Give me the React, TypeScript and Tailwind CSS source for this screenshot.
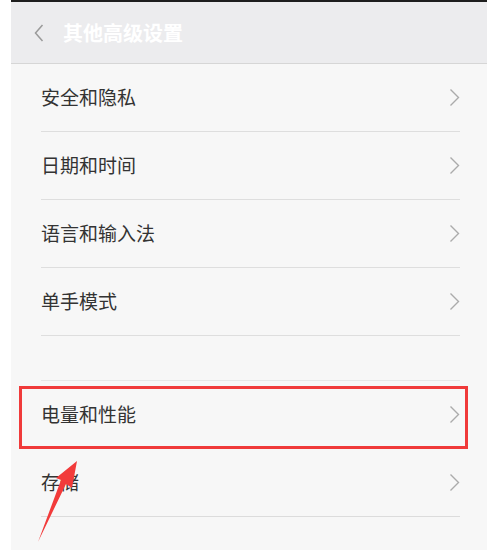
import { type ReactNode } from 'react';

const font = { fontFamily: '"Noto Sans CJK SC", "Noto Sans", sans-serif' };

function Chevron() {
    return (
        <svg width="11" height="19" viewBox="0 0 11 19" className="shrink-0">
            <path d="M1.5 1.5 L9.5 9.5 L1.5 17.5" fill="none" stroke="#ababab" strokeWidth="1.4" />
        </svg>
    );
}

function Row({ label, children, last }: { label: string; children?: ReactNode; last?: boolean }) {
    return (
        <div className="relative">
            <div
                className={`ml-[30px] mr-[27px] flex h-[68px] items-center justify-between ${
                    last ? 'border-b border-[#dcdcdc]' : 'border-b border-[#dedede]'
                }`}
            >
                <span className="text-[19px] text-[#333333]">{label}</span>
                <Chevron />
            </div>
            {children}
        </div>
    );
}

export default function App() {
    return (
        <div className="relative flex h-[550px] w-[487px] overflow-hidden bg-white" style={font}>
            <div className="w-[11px] shrink-0 bg-white" />
            <div className="flex flex-1 flex-col border-t-2 border-[#1e1e1e] bg-[#f7f7f7]">
                {/* Header */}
                <div className="flex h-[62px] items-center gap-[19px] border-b border-[#d6d6d6] bg-[#ececee] pl-[23px]">
                    <svg width="10" height="18" viewBox="0 0 10 18">
                        <path d="M8.5 1 L1.5 9 L8.5 17" fill="none" stroke="#9a9a9a" strokeWidth="1.5" />
                    </svg>
                    <span className="text-[20px] font-bold text-white">其他高级设置</span>
                </div>

                <Row label="安全和隐私" />
                <Row label="日期和时间" />
                <Row label="语言和输入法" />
                <Row label="单手模式" />

                <div className="ml-[30px] mr-[27px] h-[45px] border-b border-[#e6e6e6]" />

                <Row label="电量和性能">
                    <div className="absolute left-[8px] top-[5px] h-[63px] w-[449px] border-[3px] border-[#f03a3a]" />
                </Row>
                <Row label="存储" last />
            </div>

            {/* Arrow */}
            <svg className="absolute left-0 top-0" width="487" height="550" viewBox="0 0 487 550">
                <polygon
                    points="77,461 72,488 66,484 38,542 61,480 56,478"
                    fill="#f23b3b"
                />
            </svg>
        </div>
    );
}
